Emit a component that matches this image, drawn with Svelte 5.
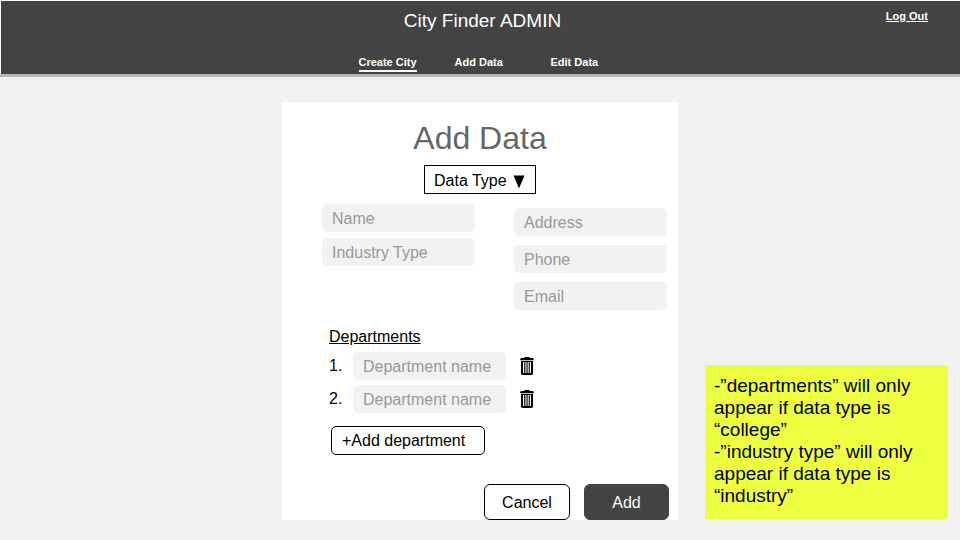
<script>
  const pages = ['Create City', 'Add Data', 'Edit Data'];
  let current = $state('Create City');

  let nextId = 3;
  let departments = $state([
    { id: 1, name: '' },
    { id: 2, name: '' }
  ]);

  function addDepartment() {
    departments.push({ id: nextId++, name: '' });
  }

  function removeDepartment(id) {
    departments = departments.filter((d) => d.id !== id);
  }
</script>

<div class="page">
  <header>
    <div class="brand">City Finder ADMIN</div>
    <a class="logout" href="#logout">Log Out</a>
    <nav>
      {#each pages as page}
        <a href="#page" class:active={page === current} onclick={() => (current = page)}>{page}</a>
      {/each}
    </nav>
  </header>

  <main>
    <form class="card" onsubmit={(e) => e.preventDefault()}>
      <h1>Add Data</h1>

      <div class="picker">
        <select aria-label="Data Type">
          <option>Data Type</option>
          <option>College</option>
          <option>Industry</option>
        </select>
        <svg class="arrow" viewBox="0 0 12 14" aria-hidden="true"><path d="M0.5 0.5H11.5L6 13.5Z" /></svg>
      </div>

      <div class="fields">
        <div class="left">
          <input type="text" placeholder="Name" aria-label="Name" />
          <input type="text" placeholder="Industry Type" aria-label="Industry Type" />
        </div>
        <div class="right">
          <input type="text" placeholder="Address" aria-label="Address" />
          <input type="tel" placeholder="Phone" aria-label="Phone" />
          <input type="email" placeholder="Email" aria-label="Email" />
        </div>
      </div>

      <section>
        <h2>Departments</h2>
        <ol>
          {#each departments as department, i (department.id)}
            <li>
              <span class="number">{i + 1}.</span>
              <input type="text" placeholder="Department name" aria-label="Department name" bind:value={department.name} />
              <button type="button" class="trash" aria-label="Remove department" onclick={() => removeDepartment(department.id)}>
                <svg viewBox="0 0 14 18" aria-hidden="true">
                  <path d="M4.5 1V0H9.5V1H13.2L14 3.2H0L0.8 1Z" />
                  <path fill-rule="evenodd" d="M1 4H13V16.6Q13 18 11.6 18H2.4Q1 18 1 16.6ZM3 5V16H4.2V5ZM5.4 5V16H6.5V5ZM7.6 5V16H8.7V5ZM9.8 5V16H11V5Z" />
                </svg>
              </button>
            </li>
          {/each}
        </ol>
        <button type="button" class="add-department" onclick={addDepartment}>+Add department</button>
      </section>

      <div class="actions">
        <button type="button" class="cancel">Cancel</button>
        <button type="submit" class="submit">Add</button>
      </div>
    </form>

    <aside>
      <p>-”departments” will only appear if data type is “college”</p>
      <p>-”industry type” will only appear if data type is “industry”</p>
    </aside>
  </main>
</div>

<style>
  :global(body) {
    background: #f2f2f2;
  }

  .page {
    font-family: "Liberation Sans", Arial, sans-serif;
    font-size: 16px;
    color: #000;
  }

  .page * {
    box-sizing: border-box;
  }

  header {
    display: grid;
    grid-template-columns: 1fr auto 1fr;
    padding: 8px 32px 2px 36px;
    background: #434343;
    border-top: 1px solid #fff;
    border-left: 1px solid #fff;
    box-shadow: 0 3px 0 #b7b7b7;
    color: #fff;
  }

  .brand {
    grid-column: 2;
    font-size: 19px;
    line-height: 24px;
  }

  header a {
    color: #fff;
    font-size: 11px;
    font-weight: bold;
    line-height: 14px;
    text-decoration: none;
  }

  header .logout {
    justify-self: end;
    text-decoration: underline;
  }

  nav {
    grid-column: 1 / -1;
    display: grid;
    grid-template-columns: repeat(3, 96px);
    justify-content: center;
    justify-items: start;
    margin-top: 22px;
    padding-left: 40px;
  }

  nav a {
    padding-bottom: 1px;
    border-bottom: 2px solid transparent;
  }

  nav a.active {
    border-bottom-color: #fff;
  }

  main {
    display: grid;
    grid-template-columns: 1fr 396px 1fr;
    align-items: end;
    padding: 28px 0 20px;
  }

  .card {
    grid-column: 2;
    display: flex;
    flex-direction: column;
    padding-top: 15px;
    background: #fff;
  }

  h1 {
    margin: 0;
    color: #666;
    font-size: 32px;
    font-weight: normal;
    line-height: 42px;
    text-align: center;
  }

  input,
  select,
  button {
    margin: 0;
    font: inherit;
    color: #000;
  }

  input {
    width: 153px;
    height: 28px;
    padding: 2px 10px 0;
    border: 0;
    border-radius: 5px;
    background: #f2f2f2;
  }

  input::placeholder {
    color: #999;
    opacity: 1;
  }

  .picker {
    position: relative;
    align-self: center;
    margin-top: 6px;
  }

  select {
    display: block;
    width: 112px;
    height: 29px;
    padding: 2px 9px 0;
    border: 1px solid #000;
    border-radius: 0;
    background: #fff;
    appearance: none;
  }

  .arrow {
    position: absolute;
    top: 10px;
    right: 11px;
    width: 12px;
    height: 14px;
    pointer-events: none;
  }

  .fields {
    display: flex;
    justify-content: space-between;
    margin-top: 10px;
    padding: 0 11px 0 40px;
  }

  .left,
  .right {
    display: flex;
    flex-direction: column;
    gap: 6px;
  }

  .right {
    gap: 9px;
    margin-top: 4px;
  }

  section {
    margin-top: 17px;
    padding-left: 47px;
  }

  h2 {
    margin: 0;
    font-size: 16px;
    font-weight: normal;
    line-height: 20px;
    text-decoration: underline;
  }

  ol {
    display: flex;
    flex-direction: column;
    gap: 5px;
    margin: 5px 0 13px;
    padding: 0;
    list-style: none;
  }

  li {
    display: flex;
    align-items: center;
  }

  .number {
    width: 24px;
  }

  .trash {
    display: flex;
    margin-left: 14px;
    padding: 0;
    border: 0;
    background: none;
  }

  .trash svg {
    width: 14px;
    height: 18px;
  }

  .add-department {
    display: block;
    width: 154px;
    height: 29px;
    margin-left: 2px;
    padding: 0 10px;
    border: 1px solid #000;
    border-radius: 5px;
    background: #fff;
    text-align: left;
  }

  .actions {
    display: flex;
    justify-content: flex-end;
    gap: 14px;
    margin-top: 29px;
    padding-right: 9px;
  }

  .actions button {
    width: 86px;
    height: 36px;
    padding: 2px 0 0;
    border: 1px solid #000;
    border-radius: 6px;
    background: #fff;
  }

  .actions .submit {
    width: 85px;
    border-color: #434343;
    background: #434343;
    color: #fff;
  }

  aside {
    margin: 0 12px 1px 27px;
    padding: 10px 9px 12px;
    background: #eeff41;
    font-size: 19px;
    line-height: 22px;
  }

  aside p {
    margin: 0;
  }
</style>
